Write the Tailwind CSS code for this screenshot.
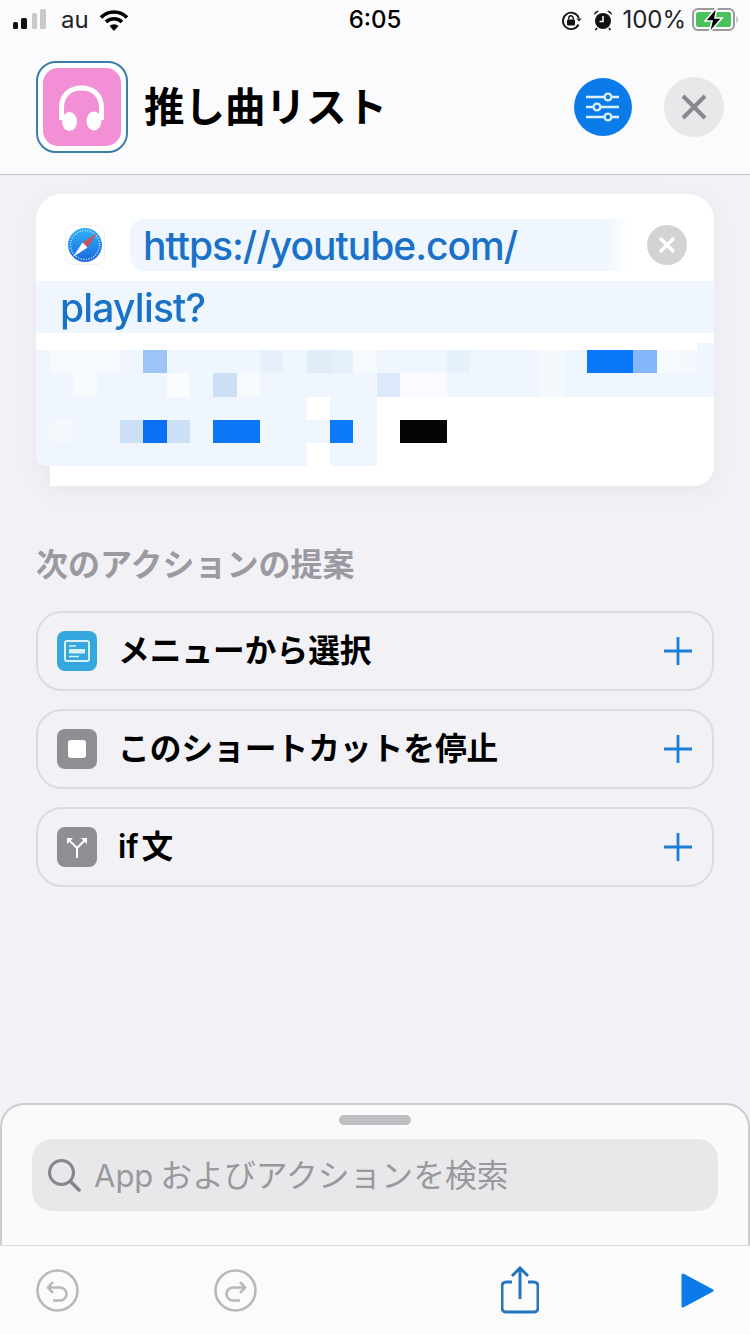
<!DOCTYPE html>
<html lang="ja">
<head>
    <meta charset="UTF-8">
    <meta name="viewport" content="width=device-width, initial-scale=1.0">
    <title>推し曲リスト</title>
    <script src="https://cdn.jsdelivr.net/npm/@tailwindcss/browser@4"></script>
</head>
<body class="bg-[#f1f1f6] font-['Inter','Noto_Sans_CJK_JP',sans-serif]">
<div class="w-[750px] h-[1334px] flex flex-col overflow-hidden">

    <!-- status bar + header -->
    <div class="bg-[#fbfbfd] border-b border-[#c4c4c9] h-[175px] shrink-0">
        <div class="h-[40px] relative flex items-center text-black">
            <svg class="ml-[13px] w-[33px] h-[40px]" viewBox="0 0 33 40">
                <rect x="0" y="22" width="5" height="7" rx="1.5" fill="#111"/>
                <rect x="8" y="18" width="6" height="11" rx="1.5" fill="#111"/>
                <rect x="19" y="13" width="5" height="16" rx="1.5" fill="#c9c9cb"/>
                <rect x="27" y="9" width="6" height="20" rx="1.5" fill="#c9c9cb"/>
            </svg>
            <span class="ml-[15px] text-[24px] leading-none font-normal text-[#222]">au</span>
            <svg class="ml-[10px] w-[30px] h-[40px]" viewBox="0 0 30 40" fill="none" stroke="#000">
                <path d="M2 17.5 A18 18 0 0 1 28 17.5" stroke-width="3.6"/>
                <path d="M7 22 A11.5 11.5 0 0 1 23 22" stroke-width="3.6"/>
                <path d="M15 31 L10.5 26 A6.5 6.5 0 0 1 19.5 26 Z" fill="#000" stroke="none"/>
            </svg>
            <span class="absolute left-0 right-0 text-center text-[24px] leading-none font-medium">6:05</span>
            <div class="ml-auto flex items-center">
                <svg class="mt-[2px] w-[21px] h-[22px]" viewBox="0 0 21 22" fill="none">
                    <path d="M17.5 14.5 A8.2 8.2 0 1 1 17.8 8" stroke="#111" stroke-width="1.8"/>
                    <path d="M15.5 8.5 H20.5 L18 11.5 Z" fill="#111"/>
                    <rect x="6" y="9.5" width="8" height="6" rx="1" fill="#111"/>
                    <path d="M7.8 9.5 V8 a2.2 2.2 0 0 1 4.4 0 V9.5" stroke="#111" stroke-width="1.4"/>
                </svg>
                <svg class="ml-[11px] mt-[-1px] w-[20px] h-[22px]" viewBox="0 0 20 22">
                    <circle cx="10" cy="12" r="8" fill="#111"/>
                    <path d="M1 6 A4 4 0 0 1 6 2 Z M19 6 A4 4 0 0 0 14 2 Z" fill="#111"/>
                    <path d="M4 19 L2.5 21 M16 19 L17.5 21" stroke="#111" stroke-width="1.6"/>
                    <path d="M10 7 V12.5 H6.5" stroke="#fff" stroke-width="1.5" fill="none"/>
                </svg>
                <span class="ml-[9px] text-[24px] leading-none font-normal text-[#222]">100%</span>
                <svg class="ml-[6px] mr-[12px] w-[46px] h-[26px]" viewBox="0 0 46 26">
                    <rect x="1" y="2" width="41" height="21" rx="5" fill="none" stroke="#9b9b9b" stroke-width="2"/>
                    <rect x="4" y="5" width="35" height="15" rx="2.5" fill="#49c15c"/>
                    <path d="M44.5 9 C46 10 46 15 44.5 16 Z" fill="#9b9b9b"/>
                    <path d="M25 0 L13 14 H20 L17 26 L30 11 H23 Z" fill="#000" stroke="#fbfbfd" stroke-width="1.6"/>
                </svg>
            </div>
        </div>

        <div class="h-[134px] pl-[36px] flex items-center">
            <div class="w-[92px] h-[92px] rounded-[20px] border-2 border-[#3b7ea6] bg-white flex items-center justify-center shrink-0">
                <div class="w-[78px] h-[78px] rounded-[15px] bg-[#f28fd5] flex items-center justify-center">
                    <svg class="w-[78px] h-[78px]" viewBox="0 0 78 78" fill="none">
                        <path d="M18.5 52 V40 C18.5 27 27 20 38.5 20 S58.5 27 58.5 40 V52" stroke="#fff" stroke-width="5"/>
                        <ellipse cx="26.5" cy="53.5" rx="7.5" ry="9.5" fill="#fff"/>
                        <ellipse cx="51" cy="53" rx="7.5" ry="9.5" fill="#fff"/>
                    </svg>
                </div>
            </div>
            <h1 class="ml-[16px] mt-[3px] text-[40.5px] leading-none font-semibold text-black">推し曲リスト</h1>
            <div class="ml-auto w-[58px] h-[58px] rounded-full bg-[#0b7bea] flex items-center justify-center">
                <svg class="w-[58px] h-[58px]" viewBox="0 0 58 58" fill="none" stroke="#d9f1ff" stroke-width="2.4">
                    <path d="M12 19 H45 M12 29 H45 M12 39 H45"/>
                    <circle cx="34" cy="19" r="3.4" fill="#0b7bea"/>
                    <circle cx="23" cy="29" r="3.4" fill="#0b7bea"/>
                    <circle cx="34" cy="39" r="3.4" fill="#0b7bea"/>
                </svg>
            </div>
            <div class="ml-[32px] mr-[26px] w-[60px] h-[60px] rounded-full bg-[#e8e8ea] flex items-center justify-center">
                <svg class="w-[26px] h-[26px]" viewBox="0 0 26 26" stroke="#87878c" stroke-width="4">
                    <path d="M2 2 L24 24 M24 2 L2 24"/>
                </svg>
            </div>
        </div>
    </div>

    <!-- main -->
    <div class="flex-1 px-[36px] pt-[19px]">
        <div class="drop-shadow-[0_6px_12px_rgba(40,40,80,0.05)]">
            <div class="bg-white rounded-t-[26px] rounded-bl-[10px] overflow-hidden">
                <div class="h-[87px] pt-[15px] flex items-center">
                    <div class="ml-[29px] w-[40px] h-[40px] rounded-[9px] border border-[#eeeeee] bg-white flex items-center justify-center shrink-0">
                        <svg class="w-[38px] h-[38px]" viewBox="0 0 38 38">
                            <defs>
                                <linearGradient id="safari" x1="0" y1="0" x2="0" y2="1">
                                    <stop offset="0" stop-color="#2fb2f5"/>
                                    <stop offset="1" stop-color="#1a67e0"/>
                                </linearGradient>
                            </defs>
                            <circle cx="19" cy="19" r="17" fill="url(#safari)"/>
                            <circle cx="19" cy="19" r="14.5" fill="none" stroke="#bfe3fb" stroke-width="1.6" stroke-dasharray="1 1.6"/>
                            <path d="M31 7 L16.5 16.5 L21.5 21.5 Z" fill="#c9535c"/>
                            <path d="M7 31 L16.5 16.5 L21.5 21.5 Z" fill="#fff"/>
                        </svg>
                    </div>
                    <div class="ml-[25px] w-[500px] h-[52px] rounded-l-[14px] bg-linear-to-r from-[#eff6fd] via-[#eff6fd] via-[95%] to-white pl-[13px] flex items-center text-[39px] leading-none tracking-[-1px] font-[450] text-[#1a72c8] whitespace-nowrap">https://youtube.com/</div>
                    <div class="ml-[17px] w-[40px] h-[40px] rounded-full bg-[#d3d3d5] flex items-center justify-center">
                        <svg class="w-[18px] h-[18px]" viewBox="0 0 18 18" stroke="#fff" stroke-width="3.4">
                            <path d="M2 2 L16 16 M16 2 L2 16"/>
                        </svg>
                    </div>
                </div>
                <div class="h-[52px] bg-[#eff6fd] pl-[24px] flex items-center text-[39px] leading-none tracking-[-0.8px] font-[450] text-[#1a72c8]">playlist?</div>
                <div class="h-[17px] flex justify-end items-end"><div class="w-[17px] h-[7px] bg-[#eff6fd]"></div></div>

                <!-- pixelated part of the url -->
                <div class="h-[23px] flex bg-[#eff6fd]">
                    <div class="ml-[14px] w-[70px] bg-[#f6f9fd]"></div>
                    <div class="ml-[23px] w-[24px] bg-[#9cc4f7]"></div>
                    <div class="ml-[93px] w-[23px] bg-[#e8f1fb]"></div>
                    <div class="ml-[24px] w-[26px] bg-[#e1ecf9]"></div>
                    <div class="w-[20px] bg-[#e6f0fb]"></div>
                    <div class="w-[24px] bg-[#f6f9fd]"></div>
                    <div class="ml-[70px] w-[23px] bg-[#e7f1fb]"></div>
                    <div class="ml-[70px] w-[23px] bg-[#f5f9fd]"></div>
                    <div class="ml-[24px] w-[46px] bg-[#0a78fa]"></div>
                    <div class="w-[24px] bg-[#84b7f9]"></div>
                    <div class="w-[23px] bg-[#f7fafe]"></div>
                    <div class="w-[17px] bg-[#f4f8fd]"></div>
                </div>
                <div class="h-[24px] flex bg-[#eff6fd]">
                    <div class="ml-[37px] w-[24px] bg-[#f8fbfe]"></div>
                    <div class="ml-[70px] w-[23px] bg-[#fafcfe]"></div>
                    <div class="ml-[23px] w-[24px] bg-[#cbdff7]"></div>
                    <div class="w-[23px] bg-[#f8fbfe]"></div>
                    <div class="ml-[117px] w-[23px] bg-[#dbe9fa]"></div>
                    <div class="w-[47px] bg-[#f9fbfe]"></div>
                    <div class="ml-[93px] w-[23px] bg-[#f5f9fd]"></div>
                </div>
                <div class="h-[23px] flex bg-[#eff6fd]">
                    <div class="ml-[271px] w-[23px] bg-white"></div>
                    <div class="ml-[47px] flex-1 bg-white"></div>
                </div>
                <div class="h-[23px] flex bg-[#eff6fd]">
                    <div class="ml-[14px] w-[23px] bg-[#f4f8fd]"></div>
                    <div class="ml-[47px] w-[23px] bg-[#cbdff7]"></div>
                    <div class="w-[24px] bg-[#0a6ff0]"></div>
                    <div class="w-[23px] bg-[#cbdff7]"></div>
                    <div class="ml-[23px] w-[47px] bg-[#0a75f5]"></div>
                    <div class="ml-[70px] w-[23px] bg-[#0b7bfb]"></div>
                    <div class="ml-[24px] flex-1 bg-white pl-[23px]"><div class="w-[47px] h-full bg-[#050505]"></div></div>
                </div>
                <div class="h-[23px] flex bg-[#eff6fd]">
                    <div class="ml-[271px] w-[23px] bg-white"></div>
                    <div class="ml-[47px] flex-1 bg-white"></div>
                </div>
            </div>
            <div class="ml-[14px] h-[20px] bg-white rounded-br-[26px]"></div>
        </div>

        <h2 class="mt-[62px] h-[34px] flex items-center text-[32px] leading-none font-semibold text-[#9a9aa0]">次のアクションの提案</h2>

        <div class="mt-[29px] flex flex-col gap-[18px]">
            <div class="h-[80px] rounded-[26px] border-2 border-[#dcdce0] pl-[19px] pr-[20px] flex items-center">
                <div class="w-[40px] h-[40px] rounded-[8px] bg-[#35a7de] flex items-center justify-center">
                    <svg class="w-[26px] h-[22px]" viewBox="0 0 26 22" fill="none" stroke="#d8f1fb">
                        <rect x="1" y="1" width="24" height="20" rx="2" stroke-width="2"/>
                        <rect x="5" y="9" width="16" height="4.5" fill="#d8f1fb" stroke="none"/>
                        <path d="M5 6 H12 M5 16.5 H15" stroke-width="1.6"/>
                    </svg>
                </div>
                <span class="ml-[21px] text-[31.7px] leading-none font-semibold text-black">メニューから選択</span>
                <svg class="ml-auto w-[28px] h-[28px]" viewBox="0 0 28 28" stroke="#1c7fd6" stroke-width="2.8"><path d="M14 0 V28 M0 14 H28"/></svg>
            </div>
            <div class="h-[80px] rounded-[26px] border-2 border-[#dcdce0] pl-[19px] pr-[20px] flex items-center">
                <div class="w-[40px] h-[40px] rounded-[8px] bg-[#8e8e93] flex items-center justify-center">
                    <div class="w-[18px] h-[18px] rounded-[3px] bg-white"></div>
                </div>
                <span class="ml-[21px] text-[31.7px] leading-none font-semibold text-black">このショートカットを停止</span>
                <svg class="ml-auto w-[28px] h-[28px]" viewBox="0 0 28 28" stroke="#1c7fd6" stroke-width="2.8"><path d="M14 0 V28 M0 14 H28"/></svg>
            </div>
            <div class="h-[80px] rounded-[26px] border-2 border-[#dcdce0] pl-[19px] pr-[20px] flex items-center">
                <div class="w-[40px] h-[40px] rounded-[8px] bg-[#8e8e93] flex items-center justify-center">
                    <svg class="w-[24px] h-[24px]" viewBox="0 0 24 24" fill="none" stroke="#fff" stroke-width="2">
                        <path d="M12 23 V13 L4 5 M12 13 L20 5"/>
                        <path d="M2 3 H8 L2 9 Z M22 3 H16 L22 9 Z" fill="#fff" stroke="none"/>
                    </svg>
                </div>
                <span class="ml-[21px] text-[31.7px] leading-none font-semibold text-black">if<span class="ml-[3px]">文</span></span>
                <svg class="ml-auto w-[28px] h-[28px]" viewBox="0 0 28 28" stroke="#1c7fd6" stroke-width="2.8"><path d="M14 0 V28 M0 14 H28"/></svg>
            </div>
        </div>
    </div>

    <!-- action search sheet -->
    <div class="h-[142px] shrink-0 bg-[#fafafb] rounded-t-[24px] border-t-2 border-x-2 border-[#cdcdd1] px-[30px] flex flex-col">
        <div class="mt-[10px] mx-auto w-[72px] h-[10px] rounded-full bg-[#bdbdc2]"></div>
        <div class="mt-[14px] h-[72px] rounded-[20px] bg-[#e8e8ea] pl-[15px] flex items-center">
            <svg class="w-[34px] h-[34px]" viewBox="0 0 34 34" fill="none" stroke="#86868b" stroke-width="3">
                <circle cx="14.5" cy="14.5" r="12"/>
                <path d="M23.5 23.5 L32 32" stroke-linecap="round" stroke-width="3.6"/>
            </svg>
            <span class="ml-[13px] mt-[2px] text-[31px] leading-none text-[#98989d]">App<span class="ml-[7px] text-[31.8px]">およびアクションを検索</span></span>
        </div>
    </div>

    <!-- toolbar -->
    <div class="h-[89px] shrink-0 bg-[#fbfbfc] border-t border-[#dcdcde] flex items-center pl-[36px] pr-[36px]">
        <svg class="w-[43px] h-[43px]" viewBox="0 0 43 43" fill="none" stroke="#b8b8bb" stroke-width="2.6">
            <circle cx="21.5" cy="21.5" r="20"/>
            <path d="M17 13 L12 18.5 L17 24 M12.5 18.5 H24 a6 6 0 0 1 0 13 H17"/>
        </svg>
        <svg class="ml-[135px] w-[43px] h-[43px]" viewBox="0 0 43 43" fill="none" stroke="#b8b8bb" stroke-width="2.6">
            <circle cx="21.5" cy="21.5" r="20"/>
            <path d="M26 13 L31 18.5 L26 24 M30.5 18.5 H19 a6 6 0 0 0 0 13 H26"/>
        </svg>
        <svg class="ml-[244px] w-[38px] h-[48px]" viewBox="0 0 38 48" fill="none" stroke="#2576bc" stroke-width="3">
            <path d="M11 16 H5 a4 4 0 0 0 -4 4 V42 a4 4 0 0 0 4 4 H33 a4 4 0 0 0 4 -4 V20 a4 4 0 0 0 -4 -4 H27"/>
            <path d="M19 33 V2 M11 10 L19 2 L27 10"/>
        </svg>
        <svg class="ml-auto w-[33px] h-[37px]" viewBox="0 0 33 37">
            <path d="M2 3 L31 18.5 L2 34 Z" fill="#0b7bea" stroke="#0b7bea" stroke-width="3" stroke-linejoin="round"/>
        </svg>
    </div>
</div>
</body>
</html>
